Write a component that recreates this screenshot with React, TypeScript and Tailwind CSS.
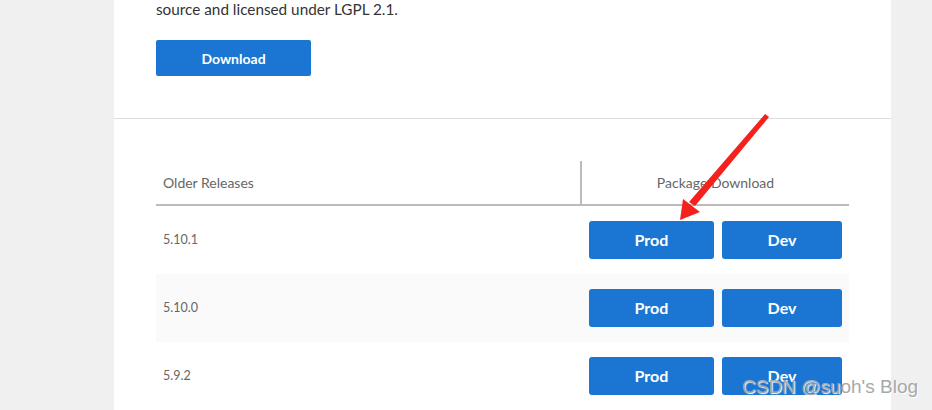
import React from "react";

const releases = [
  { version: "5.10.1", striped: false },
  { version: "5.10.0", striped: true },
  { version: "5.9.2", striped: false },
];

const BlueButton = ({ label, className = "" }: { label: string; className?: string }) => (
  <button
    className={`h-[38px] rounded-[3px] bg-[#1b76d3] text-[16px] font-bold text-white ${className}`}
  >
    {label}
  </button>
);

export default function App() {
  return (
    <div className="relative flex h-[410px] w-[932px] overflow-hidden bg-[#f0f0f0] font-['Lato','Noto_Sans',sans-serif]">
      <div className="w-[114px] shrink-0" />
      <div className="flex w-[777px] shrink-0 flex-col bg-white">
        {/* intro + download */}
        <div className="pl-[42px]">
          <p className="-mt-[1px] text-[15.3px] leading-[20px] text-[#333]">
            source and licensed under LGPL 2.1.
          </p>
          <button className="mt-[21px] h-[36px] w-[155px] rounded-[2px] bg-[#1b76d3] text-[14px] font-bold text-white">
            Download
          </button>
        </div>
        <div className="mt-[42px] h-px bg-[#dddddd]" />

        {/* older releases table */}
        <div className="mt-[42px] ml-[42px] w-[693px]">
          <div className="flex h-[43px] items-center">
            <div className="flex h-full w-[424px] items-center pl-[7px] text-[14px] text-[#666]">
              Older Releases
            </div>
            <div className="h-full w-[2px] bg-[#bbbbbb]" />
            <div className="flex h-full flex-1 items-center justify-center text-[14px] text-[#666]">
              Package Download
            </div>
          </div>
          <div className="h-[2px] bg-[#bbbbbb]" />
          {releases.map((r) => (
            <div
              key={r.version}
              className={`flex h-[68px] items-center ${r.striped ? "bg-[#fafafa]" : "bg-white"}`}
            >
              <div className="w-[426px] pl-[7px] text-[12.5px] text-[#666]">{r.version}</div>
              <div className="flex flex-1 gap-[8px] pl-[7px]">
                <BlueButton label="Prod" className="w-[125px]" />
                <BlueButton label="Dev" className="w-[120px]" />
              </div>
            </div>
          ))}
        </div>
      </div>

      {/* annotation arrow */}
      <svg className="pointer-events-none absolute left-0 top-0" width="932" height="410">
        <polygon points="765,114 769,117 695,206 689,202" fill="#f4221c" />
        <polygon points="680,220 683,199 700,212" fill="#f4221c" />
      </svg>

      {/* watermark */}
      <div className="pointer-events-none absolute left-[742px] top-[375px] font-['Liberation_Sans',sans-serif] text-[19px] leading-[24px] text-[#a8a8a8] [text-shadow:1px_1px_1px_#ffffff]">
        CSDN @suoh's Blog
      </div>
    </div>
  );
}
